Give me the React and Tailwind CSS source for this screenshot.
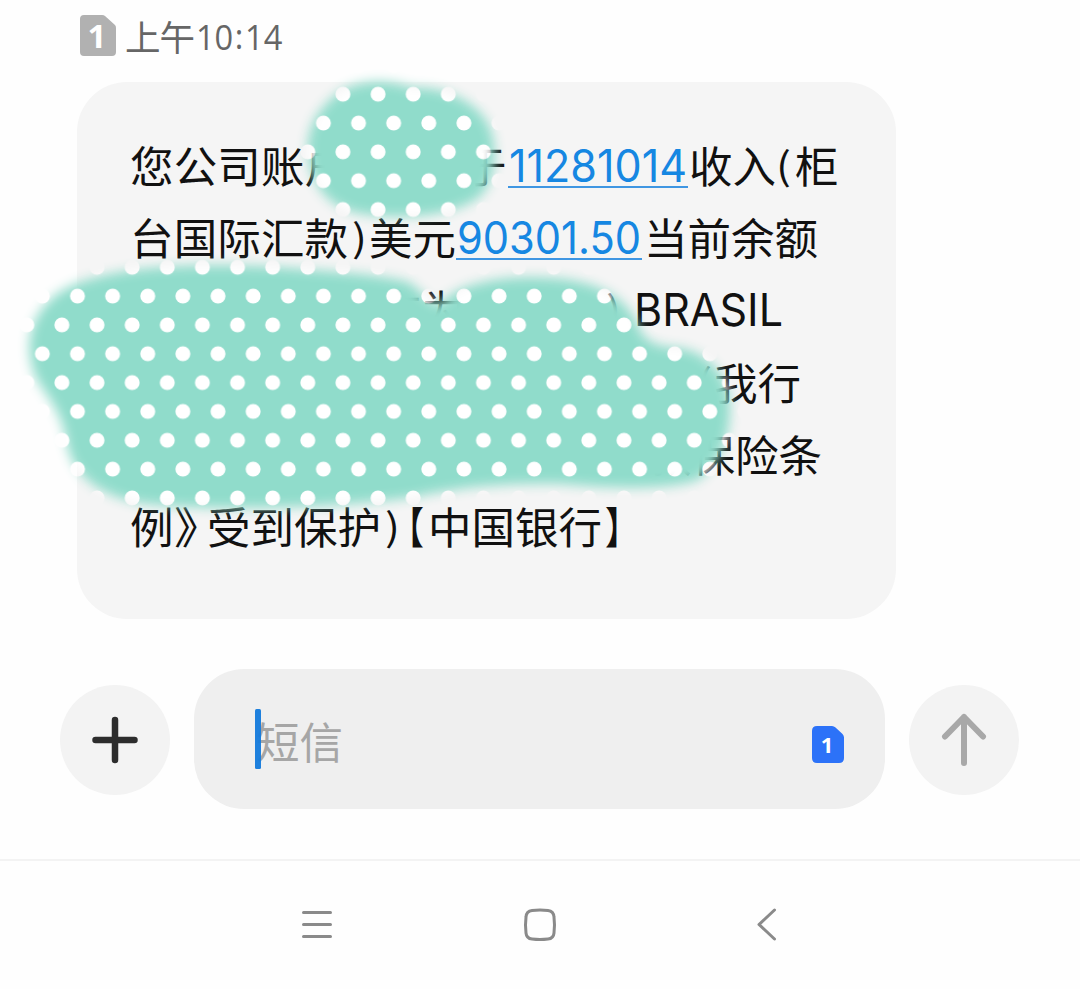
import React from 'react';

const CJK = "font-['Noto_Sans_CJK_SC',sans-serif]";

function Run({ children, className = '' }) {
  return (
    <svg className={'h-[60px] shrink-0 overflow-visible ' + className}>
      {children}
    </svg>
  );
}

// One stretch of message text, fitted to an exact advance width.
function Txt({ w, children, latin, link }) {
  return (
    <svg width={w} height="72" className="block shrink-0 overflow-visible">
      <text
        x="0"
        y={latin ? 50.5 : 52}
        textLength={w}
        lengthAdjust={latin ? 'spacingAndGlyphs' : 'spacing'}
        className={
          latin
            ? link
              ? "fill-[#1687e2] font-['Inter','Noto_Sans_CJK_SC',sans-serif] text-[44.5px]"
              : "fill-[#111111] font-['Inter','Noto_Sans_CJK_SC',sans-serif] text-[44.5px]"
            : "fill-[#111111] font-['Noto_Sans_CJK_SC',sans-serif] text-[43.5px]"
        }
      >
        {children}
      </text>
      {link && <rect x="-1" y="55" width={w + 2} height="2" fill="#3f96e2" />}
    </svg>
  );
}

// A bracket set in a narrow box of its own.
function Bracket({ w, children, round }) {
  return (
    <svg width={w} height="72" className="block shrink-0 overflow-visible">
      <text
        x="0"
        y={round ? 49 : 52}
        textLength={w}
        lengthAdjust="spacingAndGlyphs"
        className={
          round
            ? "fill-[#111111] font-['Noto_Sans_CJK_SC',sans-serif] text-[38px]"
            : "fill-[#111111] font-['Noto_Sans_CJK_SC',sans-serif] text-[43.5px] [font-feature-settings:'halt']"
        }
      >
        {children}
      </text>
    </svg>
  );
}

function Gap({ w }) {
  return <div className="shrink-0" style={{ width: w }} />;
}

function Line({ children }) {
  return <div className="flex h-[72.2px] whitespace-pre">{children}</div>;
}

function Smudge() {
  return (
    <svg className="pointer-events-none absolute left-0 top-0" width="1080" height="660" viewBox="0 0 1080 660">
      <defs>
        <pattern id="dots" x="61.9" y="94.2" width="35.13" height="57.68" patternUnits="userSpaceOnUse">
          <rect width="36" height="58" fill="#90dccb" />
          <circle cx="0" cy="0" r="7.5" fill="#fff" />
          <circle cx="35.13" cy="0" r="7.5" fill="#fff" />
          <circle cx="0" cy="57.68" r="7.5" fill="#fff" />
          <circle cx="35.13" cy="57.68" r="7.5" fill="#fff" />
          <circle cx="15.6" cy="28.84" r="7.5" fill="#fff" />
        </pattern>
        <filter id="soft" x="-10%" y="-10%" width="120%" height="120%">
          <feGaussianBlur stdDeviation="6" />
        </filter>
        <mask id="blob" maskUnits="userSpaceOnUse" x="0" y="0" width="1080" height="660">
          <g fill="#fff" filter="url(#soft)">
            <path d="M340 92 C360 79 390 79 412 88 C440 86 476 99 489 126 C499 148 496 184 478 198 C452 216 410 219 370 215 C340 212 323 199 313 176 C302 148 307 115 340 92Z" />
            <path d="M60 292 C100 267 190 262 275 267 C340 272 382 275 408 282 C422 290 430 306 441 304 C455 284 505 274 550 278 C590 280 622 293 636 321 C642 341 655 347 680 348 C706 353 723 370 729 395 C733 432 722 462 698 480 C660 492 600 487 560 484 C500 483 455 488 415 497 C340 508 210 512 140 503 C103 496 74 478 67 445 C63 415 50 400 37 380 C21 345 31 312 60 292Z" />
          </g>
        </mask>
      </defs>
      <rect width="1080" height="660" fill="url(#dots)" mask="url(#blob)" />
    </svg>
  );
}

export default function App() {
  return (
    <div className={'relative flex h-[989px] w-[1080px] flex-col overflow-hidden bg-[#fefefe] ' + CJK}>
      <header className="flex h-[82px] shrink-0 items-start pl-[80px] pt-[15px]">
        <Run className="w-[46px]">
          <path d="M4 0H22Q24 0 25 1L35 10Q36 11 36 13V37Q36 41 32 41H4Q0 41 0 37V4Q0 0 4 0Z" fill="#b1b1b1" />
          <text x="17" y="33" textAnchor="middle" className="fill-white font-['Open_Sans',sans-serif] text-[33px] font-bold">1</text>
        </Run>
        <Run className="w-[69px]">
          <text x="-1" y="35.5" textLength="70" className="fill-[#666666] font-['Noto_Sans_CJK_SC',sans-serif] text-[35.5px]">上午</text>
        </Run>
        <Run className="w-[88px]">
          <text y="34.500" transform="scale(0.92 1)" className="fill-[#666666] font-['Open_Sans',sans-serif] text-[35.5px]">
            <tspan x="1">10</tspan>
            <tspan dx="1.500" dy="-1">:</tspan>
            <tspan dx="2" dy="1">14</tspan>
          </text>
        </Run>
      </header>

      <section className="ml-[77px] h-[537px] w-[819px] shrink-0 rounded-[50px] bg-[#f5f5f5] pl-[53px] pt-[49px]">
        <Line>
          <Txt w={218}>您公司账户</Txt>
          <Gap w={115} />
          <Txt w={43.5}>于</Txt>
          <Gap w={2} />
          <Txt w={178} latin link>11281014</Txt>
          <Gap w={2} />
          <Txt w={87}>收入</Txt>
          <Bracket w={15} round>(</Bracket>
          <Gap w={4} />
          <Txt w={43.5}>柜</Txt>
        </Line>
        <Line>
          <Txt w={218}>台国际汇款</Txt>
          <Gap w={4} />
          <Bracket w={15} round>)</Bracket>
          <Gap w={2} />
          <Txt w={87}>美元</Txt>
          <Gap w={1} />
          <Txt w={184} latin link>90301.50</Txt>
          <Gap w={3} />
          <Txt w={174}>当前余额</Txt>
        </Line>
        <Line>
          <Gap w={248} />
          <Txt w={87}>方为</Txt>
          <Gap w={141} />
          <Bracket w={15} round>)</Bracket>
          <Gap w={13} />
          <Txt w={149} latin>BRASIL</Txt>
        </Line>
        <Line>
          <Gap w={567} />
          <Bracket w={15} round>(</Bracket>
          <Gap w={2} />
          <Txt w={87}>我行</Txt>
        </Line>
        <Line>
          <Gap w={518} />
          <Txt w={174}>款保险条</Txt>
        </Line>
        <Line>
          <Txt w={43.5}>例</Txt>
          <Bracket w={24}>》</Bracket>
          <Gap w={9} />
          <Txt w={174}>受到保护</Txt>
          <Gap w={4} />
          <Bracket w={15} round>)</Bracket>
          <Gap w={7} />
          <Bracket w={17}>【</Bracket>
          <Gap w={4} />
          <Txt w={174}>中国银行</Txt>
          <Gap w={3} />
          <Bracket w={17}>】</Bracket>
        </Line>
      </section>

      <section className="flex h-[240px] shrink-0 items-center pl-[60px]">
        <button className="mt-[2px] flex size-[110px] items-center justify-center rounded-full bg-[#f3f3f3]">
          <svg width="48" height="48" viewBox="0 0 48 48" fill="none" stroke="#2c2c2c" strokeWidth="6.5" strokeLinecap="round">
            <path d="M24 4V44M4.500 24H43.500" />
          </svg>
        </button>
        <div className="ml-[24px] flex h-[140px] w-[691px] items-center justify-between rounded-[50px] bg-[#efefef] pl-[61px] pr-[41px]">
          <div className="flex h-[60px] items-center">
            <svg width="90" height="60" className="overflow-visible">
              <text x="1" y="49.500" textLength="87" className="fill-[#a6a6a6] font-['Noto_Sans_CJK_SC',sans-serif] text-[43.5px]">短信</text>
              <rect x="0" y="0" width="6" height="60" rx="1.500" fill="#157bdc" fillOpacity=".96" />
            </svg>
          </div>
          <svg width="32" height="37" className="mt-[10px] overflow-visible">
            <path d="M5 0H20Q22 0 23.500 1.500L30.500 8Q32 9.500 32 11.500V32Q32 37 27 37H5Q0 37 0 32V5Q0 0 5 0Z" fill="#2c72f8" />
            <text x="15" y="27" textAnchor="middle" className="fill-white font-['Open_Sans',sans-serif] text-[22px] font-bold">1</text>
          </svg>
        </div>
        <button className="ml-[24px] mt-[2px] flex size-[110px] items-center justify-center rounded-full bg-[#f3f3f3]">
          <svg width="48" height="56" viewBox="0 0 48 56" fill="none" stroke="#a8a8a8" strokeWidth="6" strokeLinecap="round" strokeLinejoin="round">
            <path d="M24 51V5M5 24.500L24 5L43 24.500" />
          </svg>
        </button>
      </section>

      <nav className="flex h-[130px] shrink-0 items-center border-t-2 border-[#f3f3f3] pl-[301px]">
        <svg width="32" height="32" viewBox="0 0 32 32" fill="none" stroke="#8a8a8a" strokeWidth="3" strokeLinecap="round">
          <path d="M2.500 3.500H29.500M2.500 15.500H29.500M2.500 27.500H29.500" />
        </svg>
        <svg className="ml-[190px]" width="34" height="34" viewBox="0 0 34 34" fill="none" stroke="#8a8a8a" strokeWidth="3">
          <path d="M9 2.500Q17 1.700 25 2.500Q30.500 3 31 9Q32 17 31 25Q30.500 30.500 25 31Q17 32 9 31Q3.500 30.500 3 25Q2 17 3 9Q3.500 3 9 2.500Z" />
        </svg>
        <svg className="ml-[199px]" width="22" height="34" viewBox="0 0 22 34" fill="none" stroke="#8a8a8a" strokeWidth="3" strokeLinecap="round" strokeLinejoin="round">
          <path d="M18.500 2L3 16.500L18.500 31" />
        </svg>
      </nav>
      <Smudge />
    </div>
  );
}
